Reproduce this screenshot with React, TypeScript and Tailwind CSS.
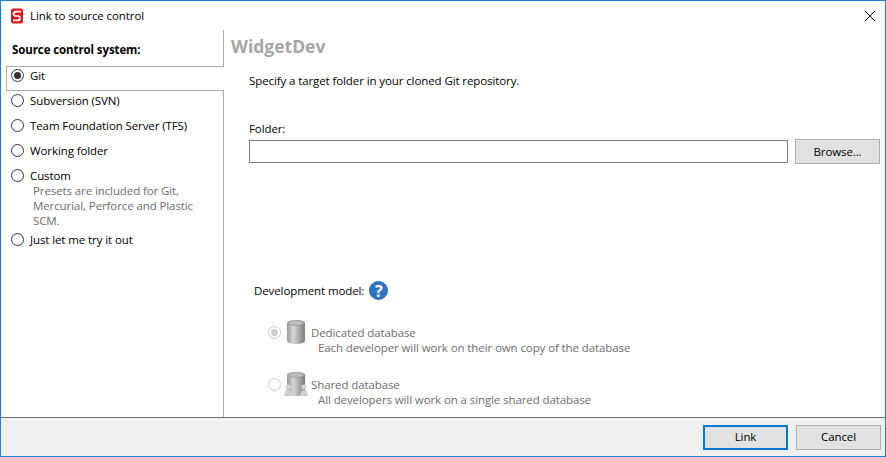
const font = { fontFamily: '"Open Sans", "Noto Sans", sans-serif' };

function Radio({ checked, muted }: { checked?: boolean; muted?: boolean }) {
  return (
    <span className={`flex h-[13px] w-[13px] shrink-0 items-center justify-center rounded-full border bg-white ${muted ? "border-[#cccccc]" : "border-[#333333]"}`}>
      {checked && <span className={`h-[7px] w-[7px] rounded-full ${muted ? "bg-[#cccccc]" : "bg-[#333333]"}`} />}
    </span>
  );
}

function Logo() {
  return (
    <svg width="14" height="16" viewBox="0 0 14 16" className="shrink-0">
      <path d="M1 2 L2.5 .5 H11.5 L13 2 V14 L11.5 15.5 H2.5 L1 14Z" fill="#d9161e" />
      <path d="M11 3.6 H5 L3.4 5.2 V6.6 L5 8 H8.6 L10.4 9.6 L8.6 12 M3 12.4 H9 L10.6 10.8 M3.4 6 L5.6 3.8" fill="none" stroke="#fff" strokeWidth="1.6" />
    </svg>
  );
}

function Help() {
  return (
    <span className="flex h-[19px] w-[19px] items-center justify-center rounded-full border border-[#2a66b0] bg-[#2f73c4] text-[16px] font-bold leading-none text-white">?</span>
  );
}

function Db({ shared }: { shared?: boolean }) {
  const id = shared ? "dbs" : "dbd";
  return (
    <svg width="28" height="26" viewBox="0 0 28 26" className="shrink-0">
      <defs>
        <linearGradient id={id} x1="0" x2="1" y1="0" y2="0">
          <stop offset="0" stopColor="#989898" />
          <stop offset="0.35" stopColor="#d6d6d6" />
          <stop offset="1" stopColor="#7c7c7c" />
        </linearGradient>
      </defs>
      <path d="M5 4 C5 0 23 0 23 4 V22 C23 26 5 26 5 22Z" fill={`url(#${id})`} />
      <ellipse cx="14" cy="4" rx="8" ry="2.4" fill="#bdbdbd" stroke="#8a8a8a" strokeWidth="0.6" />
      {shared && (
        <>
          <circle cx="6" cy="16" r="2.6" fill="#d4d4d4" />
          <path d="M2 25 L3.5 19.5 H8.5 L10 25Z" fill="#cfcfcf" />
          <circle cx="22" cy="16" r="2.6" fill="#d4d4d4" />
          <path d="M18 25 L19.5 19.5 H24.5 L26 25Z" fill="#cfcfcf" />
        </>
      )}
    </svg>
  );
}

function Option({ label }: { label: string }) {
  return (
    <div className="flex h-[25px] items-center gap-[6px] pl-[10px]">
      <Radio />
      <span>{label}</span>
    </div>
  );
}

function Model({ title, sub, checked, shared }: { title: string; sub: string; checked?: boolean; shared?: boolean }) {
  return (
    <div className="flex items-start text-[#6d6d6d]">
      <span className="mt-[7px]"><Radio checked={checked} muted /></span>
      <span className="ml-[1px] mr-[1px]"><Db shared={shared} /></span>
      <div className="flex flex-col pt-[6px] leading-[15px]">
        <span>{title}</span>
        <span className="pl-[7px]">{sub}</span>
      </div>
    </div>
  );
}

export default function App() {
  return (
    <div style={font} className="flex h-[457px] w-[886px] flex-col overflow-hidden border border-[#1883d7] bg-white text-[11.5px] tracking-[-0.1px] text-black">
      <header className="flex h-[29px] shrink-0 items-center pl-[9px] pr-[10px]">
        <Logo />
        <span className="ml-[6px]">Link to source control</span>
        <svg width="10" height="10" viewBox="0 0 10 10" className="ml-auto">
          <path d="M0 0 L10 10 M10 0 L0 10" stroke="#111" strokeWidth="1" />
        </svg>
      </header>
      <div className="flex min-h-0 flex-1">
        <aside className="flex w-[223px] shrink-0 flex-col">
          <div className="h-[36px] shrink-0 border-r border-[#aaaaaa] pl-[11px] pt-[12px] font-bold leading-[16px]">Source control system:</div>
          <div className="ml-[5px] flex h-[25px] items-start gap-[6px] border-y border-l border-[#aaaaaa] pl-[4px] pt-[2px]">
            <Radio checked />
            <span className="leading-[14px]">Git</span>
          </div>
          <div className="flex flex-1 flex-col border-r border-[#aaaaaa]">
            <div className="-mt-[3px] flex flex-col">
              <Option label="Subversion (SVN)" />
              <Option label="Team Foundation Server (TFS)" />
              <Option label="Working folder" />
              <Option label="Custom" />
              <div className="-mb-[1px] -mt-[5px] w-[200px] pl-[32px] leading-[15px] text-[#6d6d6d]">Presets are included for Git, Mercurial, Perforce and Plastic SCM.</div>
              <Option label="Just let me try it out" />
            </div>
          </div>
        </aside>
        <main className="flex min-w-0 flex-1 flex-col pl-[7px]">
          <h1 className="mt-[4px] text-[17.5px] font-bold leading-[24px] tracking-normal text-[#a6a6a6]">WidgetDev</h1>
          <p className="ml-[18px] mt-[15px] leading-[16px]">Specify a target folder in your cloned Git repository.</p>
          <label className="ml-[18px] mt-[32px] leading-[16px]">Folder:</label>
          <div className="ml-[18px] mt-[2px] flex items-center gap-[7px]">
            <div className="h-[23px] w-[539px] border border-[#7a7a7a] bg-white" />
            <button className="h-[25px] w-[85px] border border-[#adadad] bg-[#e1e1e1]">Browse...</button>
          </div>
          <div className="ml-[23px] mt-[117px] flex items-center gap-[5px]">
            <span>Development model:</span>
            <Help />
          </div>
          <div className="ml-[37px] mt-[19px] flex flex-col gap-[16px]">
            <Model checked title="Dedicated database" sub="Each developer will work on their own copy of the database" />
            <Model shared title="Shared database" sub="All developers will work on a single shared database" />
          </div>
        </main>
      </div>
      <footer className="flex h-[39px] shrink-0 items-center justify-end gap-[8px] border-t border-[#6d6d6d] bg-[#f0f0f0] pr-[4px]">
        <button className="h-[25px] w-[85px] border-2 border-[#0078d7] bg-[#e1e1e1]">Link</button>
        <button className="h-[25px] w-[85px] border border-[#adadad] bg-[#e1e1e1]">Cancel</button>
      </footer>
    </div>
  );
}
